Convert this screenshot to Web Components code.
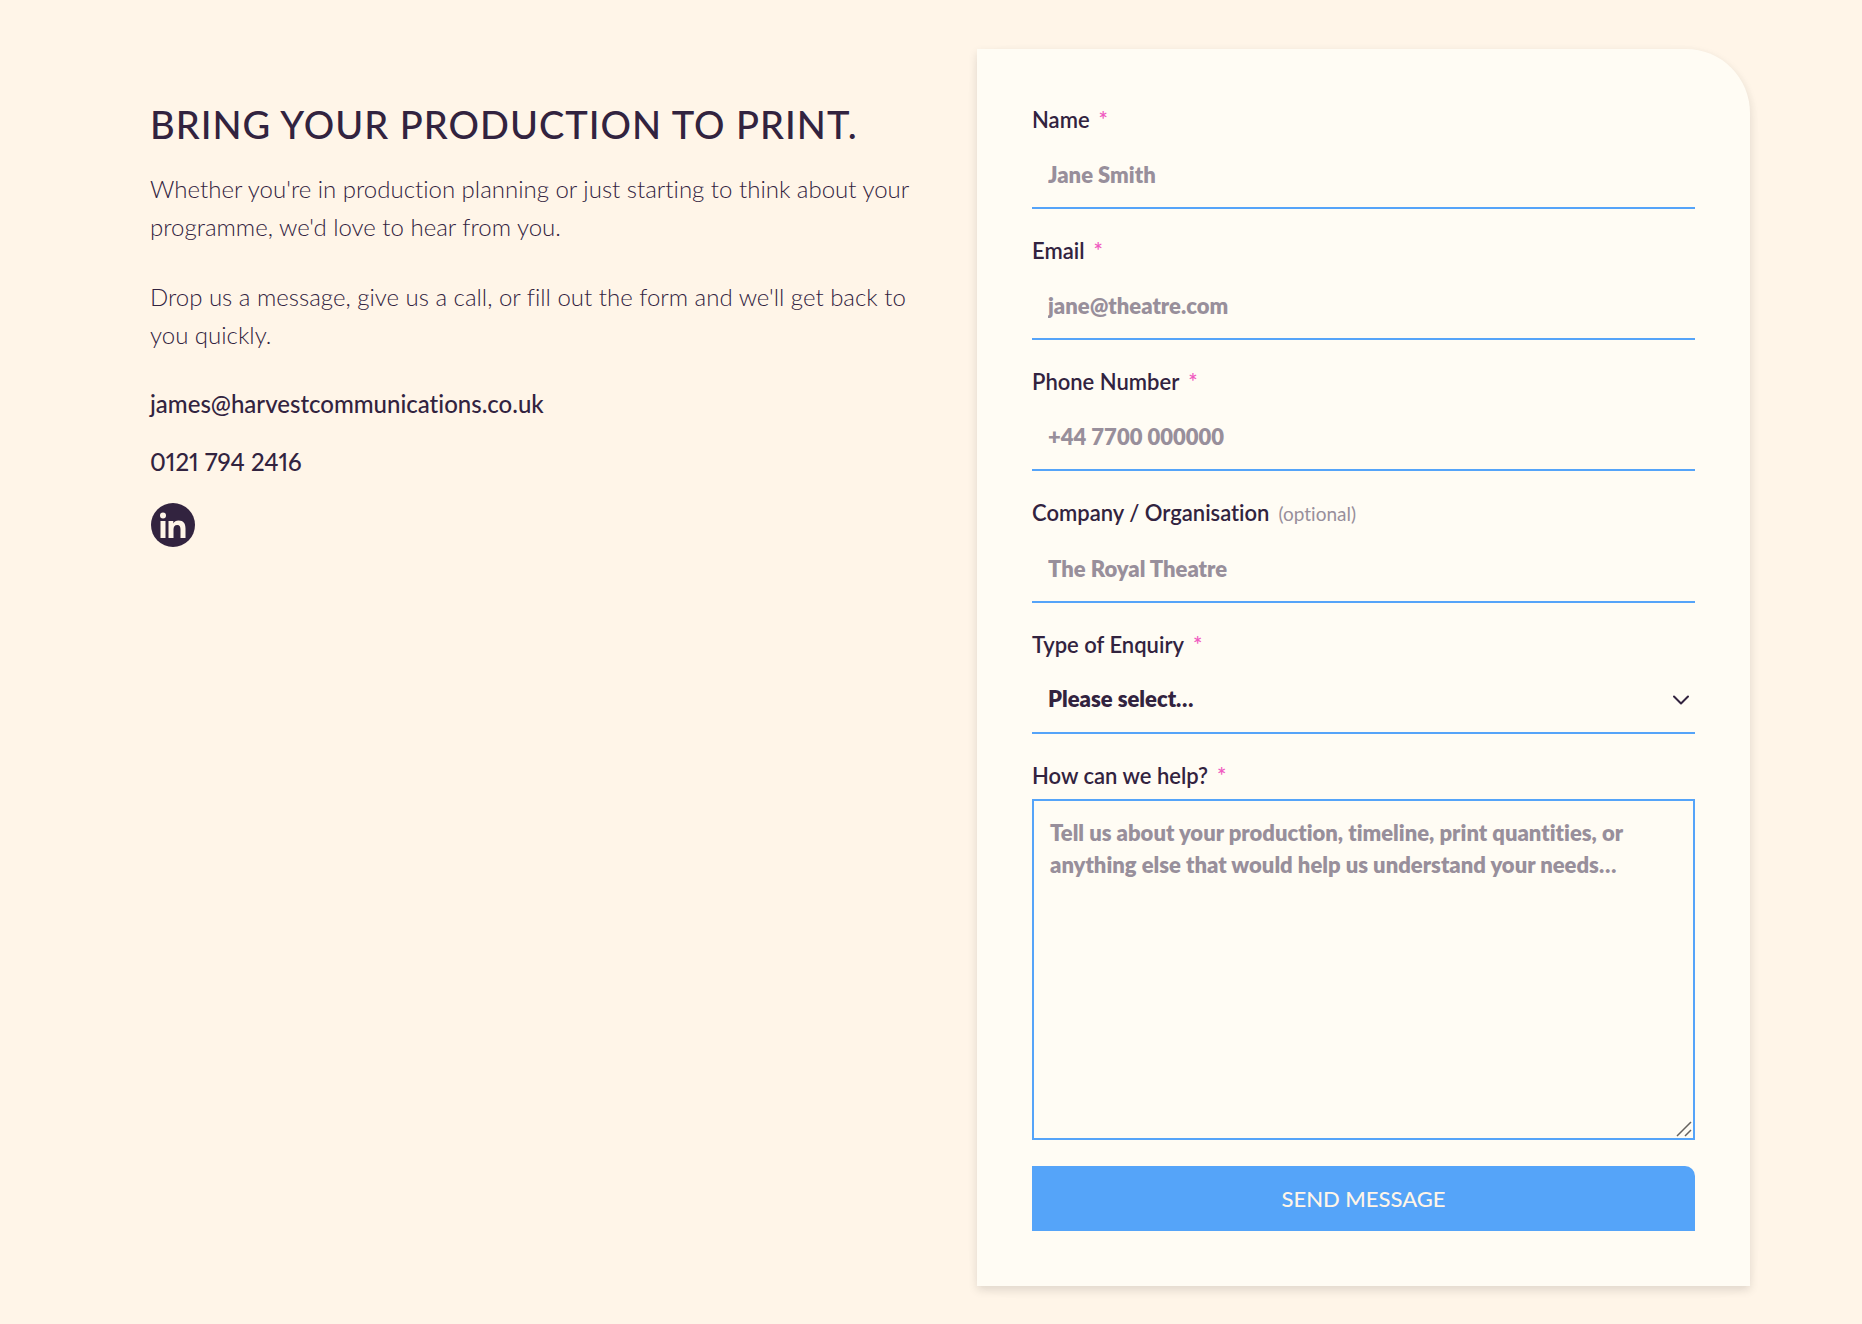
<!DOCTYPE html>
<html lang="en-GB">
<head>
<meta charset="utf-8">
<meta name="viewport" content="width=device-width, initial-scale=1">
<title>Contact – Harvest Communications</title>
<style>
:root {
  --ink: #32233f;
  --muted: #988f9b;
  --cream: #fff5e8;
  --paper: #fffcf4;
  --blue: #55a4f9;
  --pink: #f05ac0;
}
body {
  margin: 0;
  background: var(--cream);
  color: var(--ink);
  font-family: Lato, "Liberation Sans", sans-serif;
  font-variant-ligatures: none;
}
</style>
</head>
<body>
<contact-section>
  <contact-intro slot="intro" heading="BRING YOUR PRODUCTION TO PRINT.">
    <p>Whether you're in production planning or just starting to think about your programme, we'd love to hear from you.</p>
    <p>Drop us a message, give us a call, or fill out the form and we'll get back to you quickly.</p>
  </contact-intro>
  <contact-form slot="form"></contact-form>
</contact-section>

<script>
class ContactSection extends HTMLElement {
  constructor() {
    super();
    this.attachShadow({ mode: "open" }).innerHTML = `
      <style>
        :host { display: block; padding: 49px 112px 38px 150px; }
        main { display: grid; grid-template-columns: 1fr 1fr; gap: 54px; align-items: start; }
        @media (max-width: 1000px) {
          :host { padding: 24px; }
          main { grid-template-columns: minmax(0, 1fr); }
        }
      </style>
      <main><slot name="intro"></slot><slot name="form"></slot></main>`;
  }
}

class ContactIntro extends HTMLElement {
  constructor() {
    super();
    this.attachShadow({ mode: "open" }).innerHTML = `
      <style>
        :host { display: block; padding-top: 55px; }
        h1 { margin: 0 0 26px; font-size: 38px; line-height: 40px; font-weight: 500; letter-spacing: 1px; }
        .copy { display: flex; flex-direction: column; gap: 32px; font-size: 24px; line-height: 38px; font-weight: 300; }
        ::slotted(p) { margin: 0; }
        address { display: flex; flex-direction: column; align-items: flex-start; gap: 20px; margin-top: 31px;
          font-size: 24px; line-height: 38px; font-style: normal; font-weight: 500; font-variant-numeric: proportional-nums; }
        a { color: inherit; text-decoration: none; }
        svg { display: block; width: 46px; height: 48px; }
      </style>
      <h1></h1>
      <div class="copy"><slot></slot></div>
      <address>
        <a href="mailto:james@harvestcommunications.co.uk">james@harvestcommunications.co.uk</a>
        <a href="tel:+441217942416">0121 794 2416</a>
        <a href="#linkedin" aria-label="LinkedIn">
          <svg viewBox="1 0 46 48" aria-hidden="true">
            <circle cx="24" cy="24" r="22" fill="#32233f"/>
            <g fill="#fff5e8">
              <circle cx="14" cy="14.500" r="3"/>
              <path d="M11.500 20h5v17h-5z"/>
              <path d="M19.500 20h4.800v2.400c.9-1.600 2.700-2.900 5.300-2.900 5 0 6.900 3 6.900 8V37h-5v-8.400c0-2.600-.7-4.600-3.300-4.600s-3.700 2-3.700 4.600V37h-5z"/>
            </g>
          </svg>
        </a>
      </address>`;
  }
  connectedCallback() {
    this.shadowRoot.querySelector("h1").textContent = this.getAttribute("heading");
  }
}

const fieldStyles = `
  :host { display: block; }
  .label { display: flex; align-items: baseline; gap: 9px; margin-bottom: 7px;
    font-size: 22px; line-height: 32px; font-weight: 600; }
  .star { color: var(--pink); font-weight: 600; }
  .hint { color: var(--muted); font-size: 19px; font-weight: 400; }
  .control { position: relative; }
  input, select, textarea {
    display: block; box-sizing: border-box; width: 100%; margin: 0; border: 0 solid var(--blue);
    border-radius: 0; outline: 0; background: transparent; color: var(--ink);
    font-family: inherit; font-variant-ligatures: none; font-size: 22px; font-weight: 800; line-height: 32px;
  }
  input, select { height: 66px; padding: 0 16px 2px; border-bottom-width: 2px; }
  select { appearance: none; }
  textarea { height: 341px; padding: 16px; border-width: 2px; resize: vertical; }
  textarea::-webkit-resizer { background: transparent; }
  ::placeholder { color: var(--muted); opacity: 1; }
  svg { position: absolute; pointer-events: none; }
  .chevron { right: 6px; top: 24px; width: 16px; height: 16px; }
  .grip { right: 2px; bottom: 2px; width: 18px; height: 18px; }
`;

class FormField extends HTMLElement {
  constructor() {
    super();
    this.attachShadow({ mode: "open" });
  }
  control() {
    const type = this.getAttribute("type") || "text";
    return `<input id="control" type="${type}" placeholder="${this.getAttribute("placeholder")}">`;
  }
  connectedCallback() {
    const mark = this.hasAttribute("optional")
      ? `<span class="hint">(optional)</span>`
      : `<span class="star">*</span>`;
    this.shadowRoot.innerHTML = `
      <style>${fieldStyles}</style>
      <label class="label" for="control"><span>${this.getAttribute("label")}</span>${mark}</label>
      <div class="control">${this.control()}</div>`;
  }
}

class SelectField extends FormField {
  control() {
    return `
      <select id="control">
        <option>Please select…</option>
      </select>
      <svg class="chevron" viewBox="0 0 16 16" fill="none" stroke="#32233f" stroke-width="2" stroke-linecap="round" stroke-linejoin="round" aria-hidden="true">
        <path d="M1 4.500l7 7 7-7"/>
      </svg>`;
  }
}

class MessageField extends FormField {
  control() {
    return `
      <textarea id="control" placeholder="${this.getAttribute("placeholder")}"></textarea>
      <svg class="grip" viewBox="0 0 18 18" fill="none" stroke="#66625f" stroke-width="1.500" aria-hidden="true">
        <path d="M2 16L16 2M10 16l6-6"/>
      </svg>`;
  }
}

class ContactForm extends HTMLElement {
  constructor() {
    super();
    this.attachShadow({ mode: "open" }).innerHTML = `
      <style>
        :host { display: block; padding: 55px; background: var(--paper); border-top-right-radius: 64px;
          box-shadow: 0 4px 10px rgba(0, 0, 0, .12), 0 4px 40px rgba(0, 0, 0, .01); }
        form { display: flex; flex-direction: column; gap: 26px; }
        button { height: 65px; margin: 0; padding: 0 24px; border: 0; border-top-right-radius: 10px;
          background: var(--blue); color: var(--cream); font-family: inherit; font-size: 22px; font-weight: 500; }
      </style>
      <form>
        <form-field label="Name" placeholder="Jane Smith"></form-field>
        <form-field label="Email" type="email" placeholder="jane@theatre.com"></form-field>
        <form-field label="Phone Number" type="tel" placeholder="+44 7700 000000"></form-field>
        <form-field label="Company / Organisation" optional placeholder="The Royal Theatre"></form-field>
        <select-field label="Type of Enquiry"></select-field>
        <message-field label="How can we help?" placeholder="Tell us about your production, timeline, print quantities, or anything else that would help us understand your needs…"></message-field>
        <button type="button">SEND MESSAGE</button>
      </form>`;
  }
}

customElements.define("form-field", FormField);
customElements.define("select-field", SelectField);
customElements.define("message-field", MessageField);
customElements.define("contact-form", ContactForm);
customElements.define("contact-intro", ContactIntro);
customElements.define("contact-section", ContactSection);
</script>
</body>
</html>
